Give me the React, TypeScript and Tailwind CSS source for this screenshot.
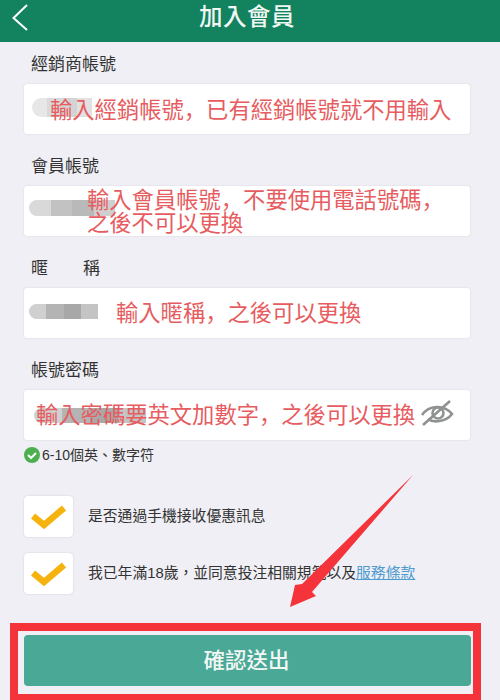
import React from "react";

const cjk = "font-['Liberation_Sans','Noto_Sans_CJK_TC',sans-serif]";

function Blur({ className }: { className: string }) {
  return <div className={"absolute flex overflow-hidden rounded-l-full " + className}>
    <div className="flex-1 bg-[#d0d0d0]" />
    <div className="flex-1 bg-[#b4b4b4]" />
    <div className="flex-1 bg-[#a8a8a8]" />
    <div className="flex-1 bg-[#c4c4c4]" />
  </div>;
}

function Field({ label, children }: { label: React.ReactNode; children: React.ReactNode }) {
  return (
    <div>
      <div className="h-[22px] mb-[9px] ml-[7px] text-[17px] leading-[22px] text-[#333] pt-[1px]">{label}</div>
      <div className="relative h-[50px] bg-white rounded-[3px] shadow-[0_0_2px_rgba(0,0,0,0.12)] mb-[21px]">{children}</div>
    </div>
  );
}

const red = "absolute text-[22.3px] leading-[23px] text-[#e65c60] whitespace-nowrap font-normal";

function Comma() {
  return <span className="font-['Noto_Sans_CJK_SC',sans-serif]">{"\uFF0C"}</span>;
}

function Check() {
  return (
    <div className="w-[49px] h-[41px] shrink-0 bg-white rounded-[4px] shadow-[0_0_2px_rgba(0,0,0,0.15)] flex items-center justify-center">
      <svg width="36" height="26" viewBox="0 0 36 26">
        <path d="M2 12 L13 21 L33 4" fill="none" stroke="#f5b30f" strokeWidth="6.5" />
      </svg>
    </div>
  );
}

export default function App() {
  return (
    <div className={"relative w-[500px] h-[700px] overflow-hidden bg-[#efeff5] " + cjk}>
      <header className="relative h-[42px] bg-[#13825f] flex items-center justify-center pb-[6px] pr-[6px]">
        <svg className="absolute left-[11px] top-[3px]" width="18" height="28" viewBox="0 0 18 28">
          <path d="M16 2 L2.5 15 L16 27" fill="none" stroke="#fff" strokeWidth="2" />
        </svg>
        <h1 className="text-[23.5px] font-medium text-[#f2f7f4] tracking-[0.5px]">加入會員</h1>
      </header>

      <main className="px-[24px] pt-[11px] w-[494px]">
        <Field label="經銷商帳號">
          <Blur className="left-[8px] top-[14px] w-[60px] h-[19px] opacity-50" />
          <span className={red + " left-[26px] top-[13px]"}>輸入經銷帳號<Comma />已有經銷帳號就不用輸入</span>
        </Field>
        <Field label="會員帳號">
          <Blur className="left-[5px] top-[14px] w-[86px] h-[16px] opacity-80" />
          <span className={red + " left-[63px] top-[1px]"}>輸入會員帳號<Comma />不要使用電話號碼<Comma /><br />之後不可以更換</span>
        </Field>
        <Field label={<span className="flex justify-between w-[69px]"><span>暱</span><span>稱</span></span>}>
          <Blur className="left-[5px] top-[16px] w-[69px] h-[15px]" />
          <span className={red + " left-[92px] top-[12px]"}>輸入暱稱<Comma />之後可以更換</span>
        </Field>
        <Field label="帳號密碼">
          <Blur className="left-[10px] top-[18px] w-[112px] h-[15px]" />
          <span className={red + " left-[12px] top-[12px]"}>輸入密碼要英文加數字<Comma />之後可以更換</span>
          <svg className="absolute left-[396px] top-[9px]" width="34" height="28" viewBox="0 0 34 28" fill="none" stroke="#8f9290" strokeWidth="2.6">
            <path d="M2 16 C9 6 24 5 32 15 C26 23 13 24 8 20" />
            <circle cx="18" cy="14" r="5.5" />
            <path d="M3 26 L30 2" />
          </svg>
        </Field>
      </main>

      <div className="flex items-center gap-[2px] ml-[24px] -mt-[14px] h-[16px]">
        <svg width="16" height="16" viewBox="0 0 16 16">
          <circle cx="8" cy="8" r="8" fill="#4caf50" />
          <path d="M4 8 L7 11 L12 6" fill="none" stroke="#fff" strokeWidth="2" />
        </svg>
        <span className="text-[14px] text-[#333] whitespace-nowrap">6-10個英、數字符</span>
      </div>

      <div className="ml-[24px] mt-[33px] flex items-center gap-[15px]">
        <Check />
        <span className="text-[14.8px] text-[#333] whitespace-nowrap">是否通過手機接收優惠訊息</span>
      </div>
      <div className="ml-[24px] mt-[16px] flex items-center gap-[15px]">
        <Check />
        <span className="text-[14.8px] text-[#333] whitespace-nowrap">我已年滿18歲{"\uFF0C"}並同意投注相關規範以及<span className="text-[#4f9bd0] underline">服務條款</span></span>
      </div>

      <div className="mt-[29px] ml-[10px] w-[471px] h-[78px] border-[8px] border-b-[7px] border-[#f5333a] px-[6px] pt-[4px]">
        <button className="w-[447px] h-[51px] rounded-[4px] bg-[#4aa897] text-[21.5px] font-medium text-[#f2f7f4] pr-[2px] pt-[2px]">確認送出</button>
      </div>

      <svg className="absolute left-0 top-0 pointer-events-none" width="500" height="700">
        <polygon points="413,475 312,592 316,596 290,607 295,585 302,584" fill="#f5333a" />
      </svg>
    </div>
  );
}
